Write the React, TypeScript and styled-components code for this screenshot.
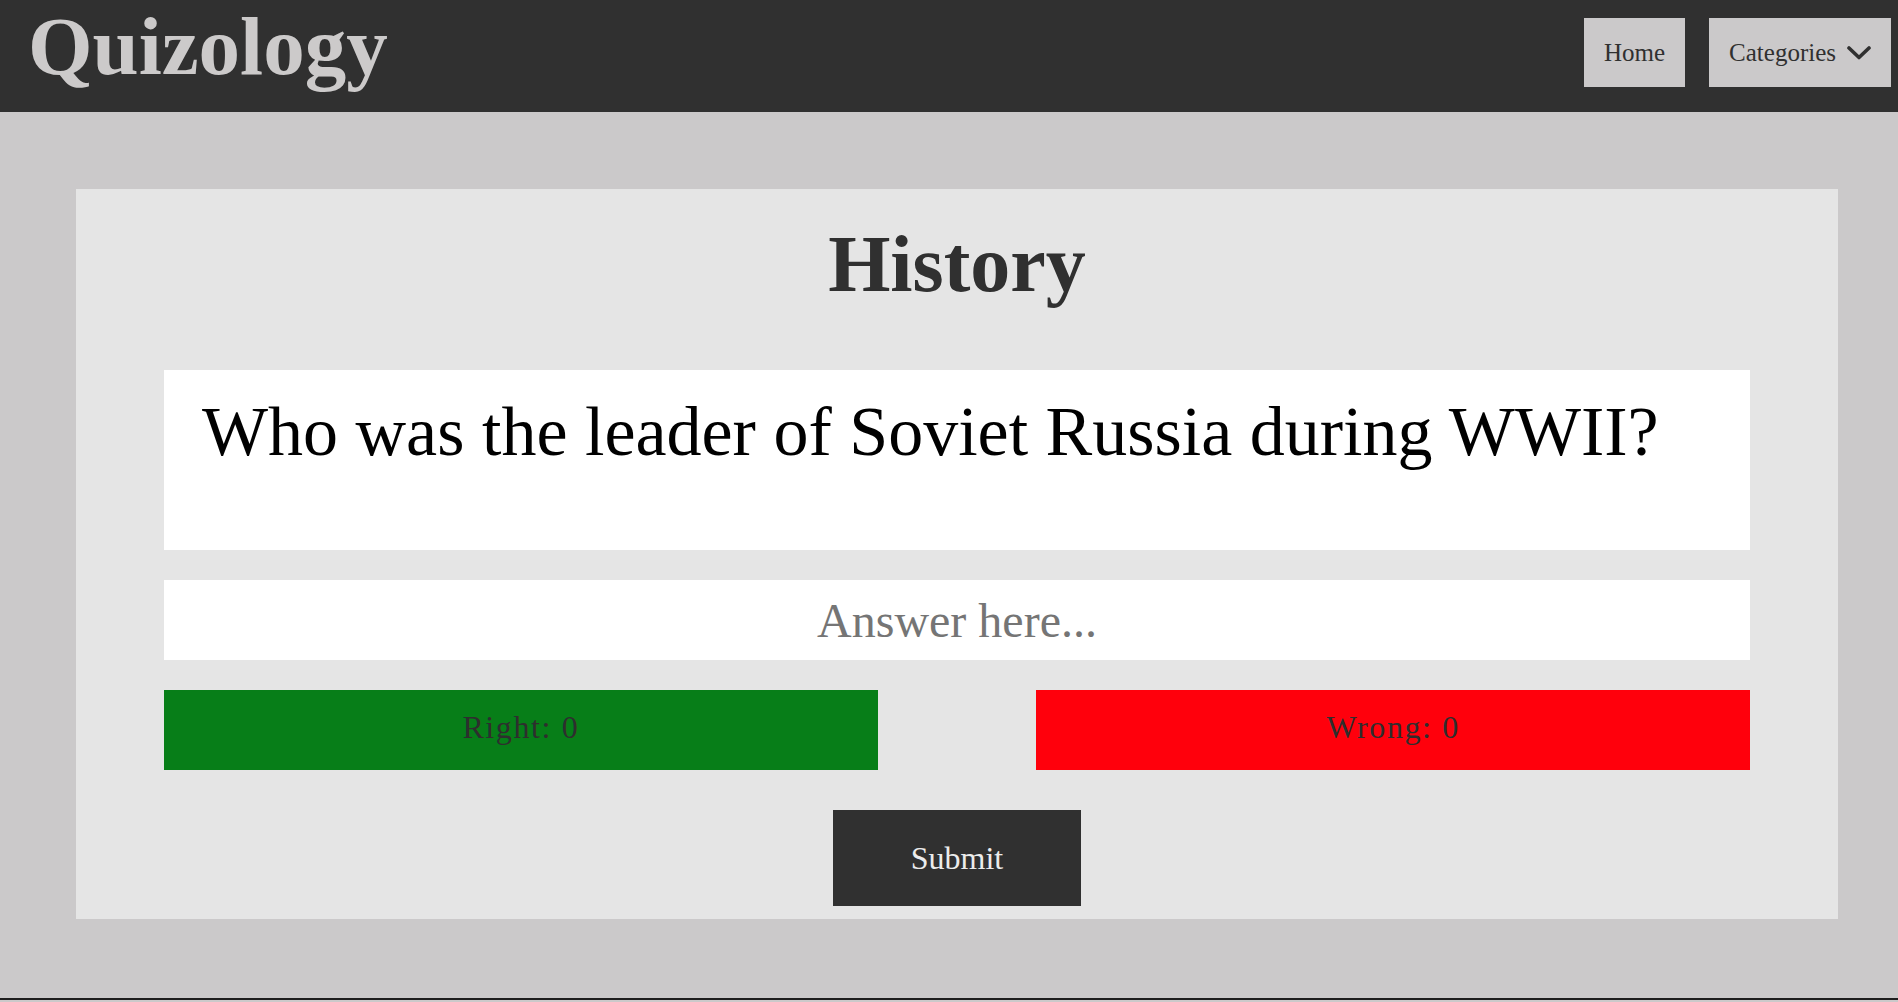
import React from "react";
import styled, { createGlobalStyle } from "styled-components";

const GlobalStyle = createGlobalStyle`
  html, body {
    margin: 0;
    padding: 0;
    background: #cbc9ca;
    font-family: "Liberation Serif", "Times New Roman", serif;
  }
  * { box-sizing: border-box; }
`;

const Header = styled.header`
  display: flex;
  justify-content: space-between;
  align-items: flex-start;
  height: 112px;
  background: #303030;
  padding: 0 7px 0 28px;
`;

const Logo = styled.h1`
  margin: 5px 0 0;
  font-size: 83px;
  line-height: 82px;
  font-weight: bold;
  color: #cccaca;
`;

const Nav = styled.nav`
  display: flex;
  gap: 24px;
  padding-top: 18px;
`;

const NavButton = styled.button`
  display: flex;
  align-items: center;
  gap: 11px;
  height: 69px;
  padding: 0 20px;
  border: none;
  background: #cbc9ca;
  color: #303030;
  font-family: "Liberation Serif", serif;
  font-size: 25px;
  cursor: pointer;
`;

const Main = styled.main`
  height: 888px;
  padding: 77px 60px 0 76px;
  border-bottom: 2px solid #1e1e1e;
`;

const Card = styled.section`
  height: 730px;
  background: #e5e5e5;
  padding: 35px 88px 0;
  display: flex;
  flex-direction: column;
  align-items: stretch;
`;

const Title = styled.h2`
  margin: 0 0 66px;
  font-size: 80px;
  line-height: 80px;
  font-weight: bold;
  color: #303030;
  text-align: center;
`;

const QuestionBox = styled.div`
  height: 180px;
  background: #ffffff;
  padding: 26px 38px 0;
`;

const QuestionText = styled.p`
  margin: 0;
  font-size: 70px;
  line-height: 72px;
  color: #000;
`;

const AnswerInput = styled.input`
  display: block;
  width: 100%;
  height: 80px;
  margin-top: 30px;
  border: none;
  outline: none;
  background: #fff;
  text-align: center;
  font-family: "Liberation Serif", serif;
  font-size: 48px;
  color: #000;
  &::placeholder { color: #757575; }
`;

const ScoreRow = styled.div`
  display: flex;
  justify-content: space-between;
  margin-top: 30px;
`;

const Score = styled.div<{ $tone: "right" | "wrong" }>`
  width: 45%;
  height: 80px;
  display: flex;
  align-items: center;
  justify-content: center;
  padding-bottom: 6px;
  background: ${(p) => (p.$tone === "right" ? "#077e18" : "#ff000c")};
  color: #2e2e2e;
  font-size: 32px;
  letter-spacing: 1.6px;
`;

const SubmitButton = styled.button`
  align-self: center;
  width: 248px;
  height: 96px;
  margin-top: 40px;
  border: none;
  background: #303030;
  color: #ececec;
  font-family: "Liberation Serif", serif;
  font-size: 32px;
  cursor: pointer;
`;

const Chevron = () => (
  <svg width="24" height="14" viewBox="0 0 24 14" fill="none">
    <polyline
      points="2,2 12,11.5 22,2"
      stroke="#303030"
      strokeWidth="3.6"
      strokeLinecap="round"
      strokeLinejoin="round"
    />
  </svg>
);

export default function App() {
  return (
    <>
      <GlobalStyle />
      <Header>
        <Logo>Quizology</Logo>
        <Nav>
          <NavButton>Home</NavButton>
          <NavButton>
            Categories
            <Chevron />
          </NavButton>
        </Nav>
      </Header>
      <Main>
        <Card>
          <Title>History</Title>
          <QuestionBox>
            <QuestionText>Who was the leader of Soviet Russia during WWII?</QuestionText>
          </QuestionBox>
          <AnswerInput placeholder="Answer here..." />
          <ScoreRow>
            <Score $tone="right">Right: 0</Score>
            <Score $tone="wrong">Wrong: 0</Score>
          </ScoreRow>
          <SubmitButton>Submit</SubmitButton>
        </Card>
      </Main>
    </>
  );
}
